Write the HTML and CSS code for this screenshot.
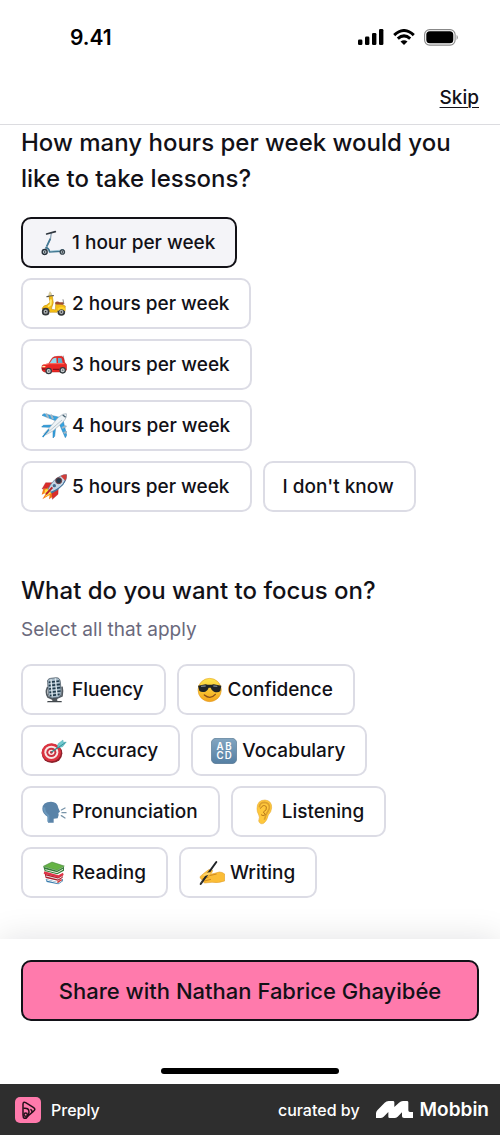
FILE: index.html
```html
<!DOCTYPE html>
<html lang="en">
<head>
<meta charset="utf-8">
<meta name="viewport" content="width=device-width, initial-scale=1">
<title>Preply – Lesson preferences</title>
<link rel="stylesheet" href="styles.css">
</head>
<body>
<div class="status-bar">
  <span class="time">9.41</span>
  <div class="status-icons">
    <svg width="26" height="17" viewBox="0 0 26 17" aria-hidden="true"><rect x="0" y="10.5" width="4.4" height="5.5" rx="1.3"/><rect x="7" y="7.5" width="4.4" height="8.5" rx="1.3"/><rect x="14" y="4" width="4.4" height="12" rx="1.3"/><rect x="21" y="0" width="4.4" height="16" rx="1.3"/></svg>
    <svg width="22" height="17" viewBox="0 0 22 17" fill="none" stroke="#000" stroke-width="3" aria-hidden="true"><path d="M1.2 6.1Q11-3 20.8 6.1M4.8 9.7Q11 4.1 17.2 9.7"/><path d="M11 16L7.5 12.5Q11 9.8 14.5 12.5Z" fill="#000" stroke="none"/></svg>
    <svg width="35" height="17" viewBox="0 0 35 17" aria-hidden="true"><rect x=".6" y=".6" width="30.5" height="15.5" rx="5" fill="none" stroke="#888" stroke-width="1.1"/><rect x="2.3" y="2.3" width="27" height="12" rx="3.5"/><path d="M32.6 5.7Q35 8.4 32.6 11Z" fill="#888"/></svg>
  </div>
</div>
<header class="top-nav"><a class="skip" href="#focus">Skip</a></header>

<main class="content">
  <section aria-labelledby="hours">
    <h1 class="question" id="hours">How many hours per week would you like to take lessons?</h1>
    <div class="chips" role="radiogroup" aria-labelledby="hours">
      <label class="chip"><input class="chip-input" type="radio" name="hours" checked>
        <svg class="emoji" viewBox="0 0 78 78" aria-hidden="true"><path d="M31 9L28 28L13 59" fill="none" stroke="#8da3b5" stroke-width="4"/><path d="M28 26L17 49" stroke="#437994" stroke-width="5"/><path d="M17 12L43 5" stroke="#30373f" stroke-width="5" stroke-linecap="round"/><path d="M13 53Q23 53 26 66L60 64Q60 58 68 60" fill="none" stroke="#3e7590" stroke-width="5"/><path d="M28 63L57 61" stroke="#82b5c8" stroke-width="2"/><circle cx="11" cy="66" r="7.5" fill="#b8c6ce" stroke="#28313a" stroke-width="4"/><circle cx="64" cy="66" r="6.5" fill="#b8c6ce" stroke="#38444d" stroke-width="4"/><circle cx="11" cy="66" r="2"/><circle cx="64" cy="66" r="2"/></svg>
        <span>1 hour per week</span></label>
      <label class="chip"><input class="chip-input" type="radio" name="hours">
        <svg class="emoji" viewBox="0 0 78 78" aria-hidden="true"><path d="M25 16L34 43" stroke="#a78b31" stroke-width="4"/><path d="M27 2L32 9L30 17L23 15L24 8Z" fill="#e2d5a1" stroke="#aa9b62"/><path d="M18 17L37 14" stroke="#52514e" stroke-width="4" stroke-linecap="round"/><path d="M24 17L34 16L37 35L31 54L43 57L44 40Q57 34 73 45L72 61Q64 67 53 59L48 64H27L20 53L3 54Q6 43 17 42L27 34Z" fill="#f5bd15" stroke="#b8870b" stroke-width="1.5"/><path d="M30 25L29 41L21 47" fill="none" stroke="#ffed74" stroke-width="5"/><path d="M42 35Q48 29 56 34L69 34Q72 39 66 41L43 40Z" fill="#9d4d31"/><path d="M66 25L68 38" stroke="#888" stroke-width="3"/><g fill="#aaaeb0" stroke="#34383b" stroke-width="5"><circle cx="14" cy="62" r="9"/><circle cx="61" cy="63" r="9"/></g><circle cx="14" cy="62" r="2"/><circle cx="61" cy="63" r="2"/><path d="M50 52Q62 42 74 53L72 60Q61 50 51 60Z" fill="#ffd329"/></svg>
        <span>2 hours per week</span></label>
      <label class="chip"><input class="chip-input" type="radio" name="hours">
        <svg class="emoji" viewBox="0 0 78 78" aria-hidden="true"><path d="M67 11L69 27" stroke="#777" stroke-width="2"/><path d="M23 35L33 19Q37 13 51 13H62Q68 13 71 31L77 38V54Q73 60 66 60H10Q2 57 2 48L4 40Z" fill="#e92825" stroke="#ad1919" stroke-width="1.5"/><path d="M26 34L35 20Q39 17 46 17L47 34Z" fill="#93d9ed"/><path d="M51 18H61Q64 24 65 33H51Z" fill="#64aac7"/><path d="M6 39L26 35L70 35" fill="none" stroke="#ff7160" stroke-width="3"/><path d="M4 42H14L12 46H4Z" fill="#fff2a9"/><path d="M3 51H14M36 52H54" stroke="#8d1018" stroke-width="4"/><g fill="#d2d6d8" stroke="#333b40" stroke-width="4"><circle cx="23" cy="57" r="8"/><circle cx="65" cy="55" r="8"/></g><circle cx="23" cy="57" r="3" fill="#747c80"/><circle cx="65" cy="55" r="3" fill="#747c80"/></svg>
        <span>3 hours per week</span></label>
      <label class="chip"><input class="chip-input" type="radio" name="hours">
        <svg class="emoji" viewBox="0 0 78 78" aria-hidden="true"><path d="M46 24L3 7L9 2L60 14ZM54 31L73 74L77 67L65 17ZM25 43L2 42L7 37L35 36ZM36 50L36 75L41 70L44 42Z" fill="#36a3df" stroke="#1f76b2" stroke-width="1.5"/><path d="M17 4L21 13M31 7L35 16M65 44L74 40M70 59L78 57" stroke="#a3b6c4" stroke-width="6" stroke-linecap="round"/><path d="M13 66L9 62L25 45L50 15Q66 0 76 2Q80 12 65 28L36 54Z" fill="#eef3f6" stroke="#9cabb6" stroke-width="2"/><path d="M17 61L63 21" stroke="#bac7cf" stroke-width="3"/><path d="M65 6L74 13" stroke="#466171" stroke-width="4"/><path d="M5 72L24 49" stroke="#2288c4" stroke-width="4"/></svg>
        <span>4 hours per week</span></label>
      <label class="chip"><input class="chip-input" type="radio" name="hours">
        <svg class="emoji" viewBox="0 0 78 78" aria-hidden="true"><path d="M26 39L7 44L2 62L17 55L4 76L26 63L24 76L42 64L45 49Z" fill="#f47b17"/><path d="M28 41L12 47L10 59L21 54L12 69L30 58Z" fill="#ffe342"/><path d="M39 26L14 26L3 45L27 40ZM52 40L51 61L34 76L33 52Z" fill="#d92c2b" stroke="#9f1720"/><path d="M21 46Q33 19 57 7Q70 0 77 2Q79 15 66 31Q53 46 32 57Z" fill="#c5d6e5" stroke="#536f88" stroke-width="2"/><path d="M29 53Q52 45 65 30L75 12Q76 21 67 32Q52 49 32 58Z" fill="#45749e"/><path d="M59 6L73 20Q78 11 77 2Q69 1 59 6Z" fill="#d13c39"/><circle cx="53" cy="20" r="9" fill="#25394a" stroke="#793f43" stroke-width="3"/><circle cx="40" cy="35" r="5" fill="#426b8e"/><path d="M34 40L15 61" stroke="#ba242b" stroke-width="6"/></svg>
        <span>5 hours per week</span></label>
      <label class="chip"><input class="chip-input" type="radio" name="hours"><span>I don't know</span></label>
    </div>
  </section>

  <section id="focus" aria-labelledby="focus-title">
    <h2 class="question" id="focus-title">What do you want to focus on?</h2>
    <p class="hint">Select all that apply</p>
    <div class="chips" role="group" aria-labelledby="focus-title">
      <label class="chip"><input class="chip-input" type="checkbox" name="focus">
        <svg class="emoji" viewBox="0 0 78 78" aria-hidden="true"><path d="M20 30Q12 46 21 60L38 68L63 57Q66 42 63 29" fill="none" stroke="#535b62" stroke-width="5"/><path d="M34 61L48 59L49 72H34Z" fill="#51575c"/><path d="M20 72H62V76H18Z" fill="#42484d"/><path d="M20 17Q17 6 29 4L46 2Q57 2 58 15L61 47Q61 60 48 62L34 63Q23 62 22 49Z" fill="#a7bac8" stroke="#384552" stroke-width="2"/><path d="M23 16L55 12M23 26L57 22M24 36L58 32M25 46L59 42M27 56L56 52" stroke="#203a4a" stroke-width="5"/><path d="M30 7L34 59M43 4L48 57" stroke="#dde8ed" stroke-width="4"/></svg>
        <span>Fluency</span></label>
      <label class="chip"><input class="chip-input" type="checkbox" name="focus">
        <svg class="emoji" viewBox="0 0 78 78" aria-hidden="true"><defs><linearGradient id="face" x2="0" y2="1"><stop stop-color="#ffe64b"/><stop offset="1" stop-color="#f4a51c"/></linearGradient></defs><circle cx="38" cy="39" r="35" fill="url(#face)" stroke="#dc921f" stroke-width="1.5"/><path d="M3 26L26 22Q38 25 50 22L73 26L70 42Q63 48 51 44Q44 42 41 32H35Q32 42 25 44Q13 47 7 41Z" fill="#202426"/><path d="M12 28L26 27M49 27L61 28" stroke="#748087" stroke-width="4"/><path d="M22 54Q40 69 55 52" fill="none" stroke="#8b511b" stroke-width="4" stroke-linecap="round"/></svg>
        <span>Confidence</span></label>
      <label class="chip"><input class="chip-input" type="checkbox" name="focus">
        <svg class="emoji" viewBox="0 0 78 78" aria-hidden="true"><ellipse cx="33" cy="46" rx="31" ry="29" fill="#8e202b"/><ellipse cx="31" cy="43" rx="29" ry="27" fill="#db3340"/><ellipse cx="31" cy="43" rx="21" ry="20" fill="#f8e8e5"/><ellipse cx="31" cy="43" rx="15" ry="14" fill="#cd3040"/><ellipse cx="31" cy="43" rx="9" ry="8" fill="#fae9e7"/><circle cx="31" cy="43" r="4" fill="#c52b39"/><path d="M31 43L62 20" stroke="#35898d" stroke-width="4"/><path d="M49 27L51 17L66 6L67 13L76 12L65 26L53 29Z" fill="#71cad0" stroke="#3b9aa2"/><path d="M51 29L73 14" stroke="#348f98" stroke-width="3"/></svg>
        <span>Accuracy</span></label>
      <label class="chip"><input class="chip-input" type="checkbox" name="focus">
        <svg class="emoji" viewBox="0 0 78 78" aria-hidden="true"><defs><linearGradient id="abcd" x2="0" y2="1"><stop stop-color="#83a6c1"/><stop offset="1" stop-color="#557fa3"/></linearGradient></defs><rect x="1" y="1" width="76" height="76" rx="14" fill="url(#abcd)" stroke="#55748e" stroke-width="2"/><g class="emoji-letters"><text x="27" y="36">A</text><text x="52" y="36">B</text><text x="27" y="63">C</text><text x="52" y="63">D</text></g></svg>
        <span>Vocabulary</span></label>
      <label class="chip"><input class="chip-input" type="checkbox" name="focus">
        <svg class="emoji" viewBox="0 0 78 78" aria-hidden="true"><path d="M21 71V54Q4 44 4 29Q5 8 30 8Q49 8 52 27L57 38L52 42L53 48L50 58L38 59V71Z" fill="#5a83a8"/><path d="M22 68V50Q8 39 10 25" fill="none" stroke="#6b98bc" stroke-width="6"/><path d="M61 33L72 27M63 41H75M61 50L72 57" stroke="#7894a9" stroke-width="4" stroke-linecap="round"/></svg>
        <span>Pronunciation</span></label>
      <label class="chip"><input class="chip-input" type="checkbox" name="focus">
        <svg class="emoji" viewBox="0 0 78 78" aria-hidden="true"><path d="M18 29Q18 3 42 3Q63 5 62 27Q61 39 52 48Q48 66 38 73Q27 78 23 66Q28 54 22 45Q18 38 18 29Z" fill="#ffc83c" stroke="#dea126" stroke-width="1.5"/><path d="M25 25Q26 10 41 10Q57 12 55 28Q52 36 46 45L40 62" fill="none" stroke="#dda12d" stroke-width="5"/><path d="M28 29Q36 14 46 23Q49 34 37 39L43 47Q36 53 30 47" fill="none" stroke="#b9781a" stroke-width="3"/></svg>
        <span>Listening</span></label>
      <label class="chip"><input class="chip-input" type="checkbox" name="focus">
        <svg class="emoji" viewBox="0 0 78 78" aria-hidden="true"><path d="M14 57L51 67L66 56V63L52 73L17 66Z" fill="#397daf"/><path d="M17 60L52 69L64 61" fill="none" stroke="#e9eef0" stroke-width="3"/><path d="M11 41L51 52L65 43V53L51 62L14 54Z" fill="#a91d2d"/><path d="M15 48L51 57L64 49" fill="none" stroke="#e7e8e5" stroke-width="3"/><path d="M8 41L10 34L52 46L66 38L68 45L53 53Z" fill="#dd3447"/><path d="M7 19L33 6L70 18L48 31Z" fill="#66b345" stroke="#39782f" stroke-width="1.5"/><path d="M7 20L48 32L69 20V32L49 43L11 33Z" fill="#347e38"/><path d="M13 29L48 38L66 28" fill="none" stroke="#e8ece0" stroke-width="3"/><path d="M49 67L62 59" stroke="#dc3a36" stroke-width="4"/></svg>
        <span>Reading</span></label>
      <label class="chip"><input class="chip-input" type="checkbox" name="focus">
        <svg class="emoji" viewBox="0 0 78 78" aria-hidden="true"><path d="M3 50Q17 37 29 29L38 28Q43 31 39 37L35 43L61 36Q70 36 77 42V63Q59 70 39 67L17 69Q10 66 14 62Q6 62 8 57Q2 56 3 50Z" fill="#fbbd36" stroke="#dc951e" stroke-width="1.5"/><path d="M10 57L29 51M16 63L36 58M31 47L53 42" stroke="#d18b1f" stroke-width="3"/><path d="M52 6L21 49L5 72" fill="none" stroke="#202428" stroke-width="6" stroke-linecap="round"/><path d="M14 57L3 76L6 65Z" fill="#4d4e50"/><path d="M16 45L31 40" stroke="#ffd265" stroke-width="7" stroke-linecap="round"/></svg>
        <span>Writing</span></label>
    </div>
  </section>
</main>

<div class="action-bar">
  <button class="share" type="button">Share with Nathan Fabrice Ghayibée</button>
  <div class="home-indicator"></div>
</div>
<footer class="credit">
  <div class="brand">
    <svg width="26" height="26" viewBox="0 0 78 78" aria-hidden="true"><rect width="78" height="78" rx="15" fill="#ff7aac"/><g fill="none" stroke="#241019" stroke-width="4.5" stroke-linejoin="round"><path d="M24 54V22Q24 13 32 17L55 31Q64 37 55 43L39 57Q34 65 28 64Q24 62 24 54Z"/><path d="M25 34Q42 31 42 45Q42 50 38 57M46 37Q53 40 50 47"/><circle cx="32" cy="53" r="5"/></g></svg>
    <span>Preply</span>
  </div>
  <div class="curator">
    <span>curated by</span>
    <a class="mobbin" href="#focus"><svg width="37" height="17" viewBox="0 0 111 51" fill="#fff" aria-hidden="true"><path d="M0 51V37Q0 32 4 28L26 5Q31 0 38 0H51Q55 0 55 4V18L69 5Q74 0 81 0H93Q97 0 97 4V28Q97 33 102 33H111V51H84Q78 51 78 46V34L65 47Q61 51 55 51H41Q37 51 37 47V33L23 47Q19 51 13 51Z"/></svg><span>Mobbin</span></a>
  </div>
</footer>
</body>
</html>
```
FILE: styles.css
```css
* { box-sizing: border-box; }
body {
  margin: 0;
  min-height: 100vh;
  display: flex;
  flex-direction: column;
  background: #fff;
  color: #121117;
  font-family: Inter, "Liberation Sans", sans-serif;
  font-weight: 500;
}
.status-bar {
  display: flex;
  justify-content: space-between;
  align-items: center;
  height: 75px;
  padding: 0 41px 0 70px;
  color: #000;
}
.time { font-size: 21px; line-height: 25px; font-weight: 600; }
.status-icons { display: flex; align-items: center; gap: 9px; }
.top-nav {
  display: flex;
  justify-content: flex-end;
  align-items: center;
  height: 50px;
  padding: 0 21px 4px;
  border-bottom: 1px solid #dcdce0;
}
.skip {
  color: inherit;
  font-size: 19px;
  line-height: 24px;
  text-underline-offset: 3px;
  text-decoration-thickness: 1px;
}
.content {
  flex: 1;
  display: flex;
  flex-direction: column;
  gap: 61px;
  padding: 0 21px 40px;
}
.question {
  margin: 0;
  font-size: 24px;
  line-height: 36px;
  font-weight: 500;
}
.hint {
  margin: 7px 0 0;
  color: #6a697c;
  font-size: 19px;
  line-height: 28px;
  font-weight: 400;
}
.chips {
  display: flex;
  flex-wrap: wrap;
  gap: 10px 11px;
  margin-top: 20px;
  padding-right: 10px;
}
.chip {
  position: relative;
  display: flex;
  align-items: center;
  gap: 5px;
  height: 51px;
  padding: 0 20px 0 18px;
  border: 2px solid #dcdce5;
  border-radius: 10px;
  font-size: 19px;
  line-height: 24px;
  cursor: pointer;
}
.chip:has(:checked) { border-color: #121117; background: #f4f4f8; }
.chip:focus-within { outline: 2px solid #6a9cff; }
.chip-input {
  position: absolute;
  inset: 0;
  width: 100%;
  height: 100%;
  margin: 0;
  opacity: 0;
  cursor: pointer;
}
.emoji { width: 26px; height: 26px; flex: none; }
.emoji-letters {
  fill: #fff;
  font-size: 29px;
  font-weight: 600;
  text-anchor: middle;
}
.action-bar {
  display: flex;
  flex-direction: column;
  align-items: center;
  padding: 21px 21px 10px;
  background: #fff;
  box-shadow: 0 0 32px rgba(18, 17, 23, 0.12);
}
.share {
  width: 100%;
  height: 61px;
  border: 2px solid #121117;
  border-radius: 10px;
  background: #ff7aac;
  color: #121117;
  font: inherit;
  font-size: 22px;
  cursor: pointer;
}
.home-indicator {
  width: 178px;
  height: 6px;
  margin-top: 47px;
  border-radius: 3px;
  background: #000;
}
.credit {
  position: relative;
  display: flex;
  justify-content: space-between;
  align-items: center;
  height: 51px;
  padding: 0 11px 0 15px;
  background: #2e2e2e;
  color: #fff;
  font-size: 16px;
}
.brand { display: flex; align-items: center; gap: 10px; }
.curator { display: flex; align-items: center; gap: 16px; }
.mobbin {
  display: flex;
  align-items: center;
  gap: 7px;
  color: #fff;
  font-size: 19px;
  font-weight: 600;
  text-decoration: none;
}
```
